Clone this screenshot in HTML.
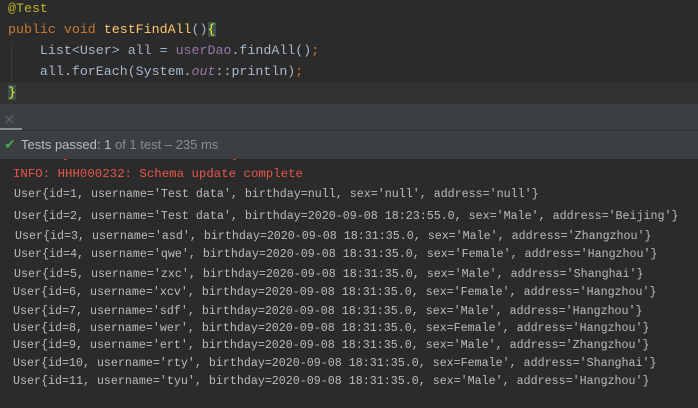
<!DOCTYPE html>
<html><head><meta charset="utf-8"><style>
body{margin:0;width:698px;height:408px;background:#2b2b2b;overflow:hidden;position:relative;font-family:"Liberation Mono",monospace}
.c{position:absolute;left:8px;font-size:13.3px;color:#a9b7c6;white-space:pre;line-height:21px}
.k{color:#cc7832}.f{color:#ffc66d}.a{color:#bbb529}.p{color:#9876aa}
.o{position:absolute;font-size:11.67px;color:#bbbbbb;white-space:pre;line-height:16px}
</style></head><body>
<div style="position:absolute;left:0;top:82px;width:698px;height:22px;background:#323232"></div>
<div style="position:absolute;left:11px;top:42px;width:1px;height:40px;background:#3b3b3b"></div>
<div class="c" style="top:-2px"><span class="a">@Test</span></div>
<div class="c" style="top:19px"><span class="k">public void </span><span class="f">testFindAll</span>()<span style="background:#3b514d;color:#ffef28">{</span></div>
<div class="c" style="top:40px">    List&lt;User&gt; all = <span class="p">userDao</span>.findAll()<span class="k">;</span></div>
<div class="c" style="top:61px">    all.forEach(System.<i class="p">out</i>::println)<span class="k">;</span></div>
<div class="c" style="top:82px"><span style="background:#3b514d;color:#ffef28">}</span></div>
<div style="position:absolute;left:0;top:104px;width:698px;height:26px;background:#3c3f41"></div>
<div style="position:absolute;left:3px;top:110px;font:15px 'DejaVu Sans',sans-serif;color:#5e6366">×</div>
<div style="position:absolute;left:0;top:128px;width:22px;height:2px;background:#8c8c8c"></div>
<div style="position:absolute;left:0;top:130px;width:698px;height:1px;background:#313335"></div>
<div style="position:absolute;left:0;top:131px;width:698px;height:28px;background:#3c3f41"></div>
<div style="position:absolute;left:4px;top:137px;font:14px 'DejaVu Sans',sans-serif;color:#49a84d">✔</div>
<div style="position:absolute;left:21px;top:137px;font:13px 'Liberation Sans',sans-serif;color:#bbbbbb">Tests passed: 1 <span style="color:#8c8c8c">of 1 test – 235 ms</span></div>
<div style="position:absolute;left:64px;top:159px;width:3px;height:1px;background:#d04040"></div>
<div style="position:absolute;left:233px;top:159px;width:3px;height:1px;background:#d04040"></div>
<div class="o" style="left:13px;top:166px;font-size:12.4px;color:#e7564c">INFO: HHH000232: Schema update complete</div>
<div class="o" style="left:14px;top:186px">User{id=1, username='Test data', birthday=null, sex='null', address='null'}</div>
<div class="o" style="left:14px;top:208px">User{id=2, username='Test data', birthday=2020-09-08 18:23:55.0, sex='Male', address='Beijing'}</div>
<div class="o" style="left:15px;top:228px">User{id=3, username='asd', birthday=2020-09-08 18:31:35.0, sex='Male', address='Zhangzhou'}</div>
<div class="o" style="left:14px;top:246px">User{id=4, username='qwe', birthday=2020-09-08 18:31:35.0, sex='Female', address='Hangzhou'}</div>
<div class="o" style="left:14px;top:266px">User{id=5, username='zxc', birthday=2020-09-08 18:31:35.0, sex='Male', address='Shanghai'}</div>
<div class="o" style="left:13px;top:284px">User{id=6, username='xcv', birthday=2020-09-08 18:31:35.0, sex='Female', address='Hangzhou'}</div>
<div class="o" style="left:13px;top:303px">User{id=7, username='sdf', birthday=2020-09-08 18:31:35.0, sex='Male', address='Hangzhou'}</div>
<div class="o" style="left:13px;top:320px">User{id=8, username='wer', birthday=2020-09-08 18:31:35.0, sex=Female', address='Hangzhou'}</div>
<div class="o" style="left:13px;top:337px">User{id=9, username='ert', birthday=2020-09-08 18:31:35.0, sex='Male', address='Zhangzhou'}</div>
<div class="o" style="left:13px;top:355px">User{id=10, username='rty', birthday=2020-09-08 18:31:35.0, sex=Female', address='Shanghai'}</div>
<div class="o" style="left:13px;top:373px">User{id=11, username='tyu', birthday=2020-09-08 18:31:35.0, sex='Male', address='Hangzhou'}</div>
</body></html>
